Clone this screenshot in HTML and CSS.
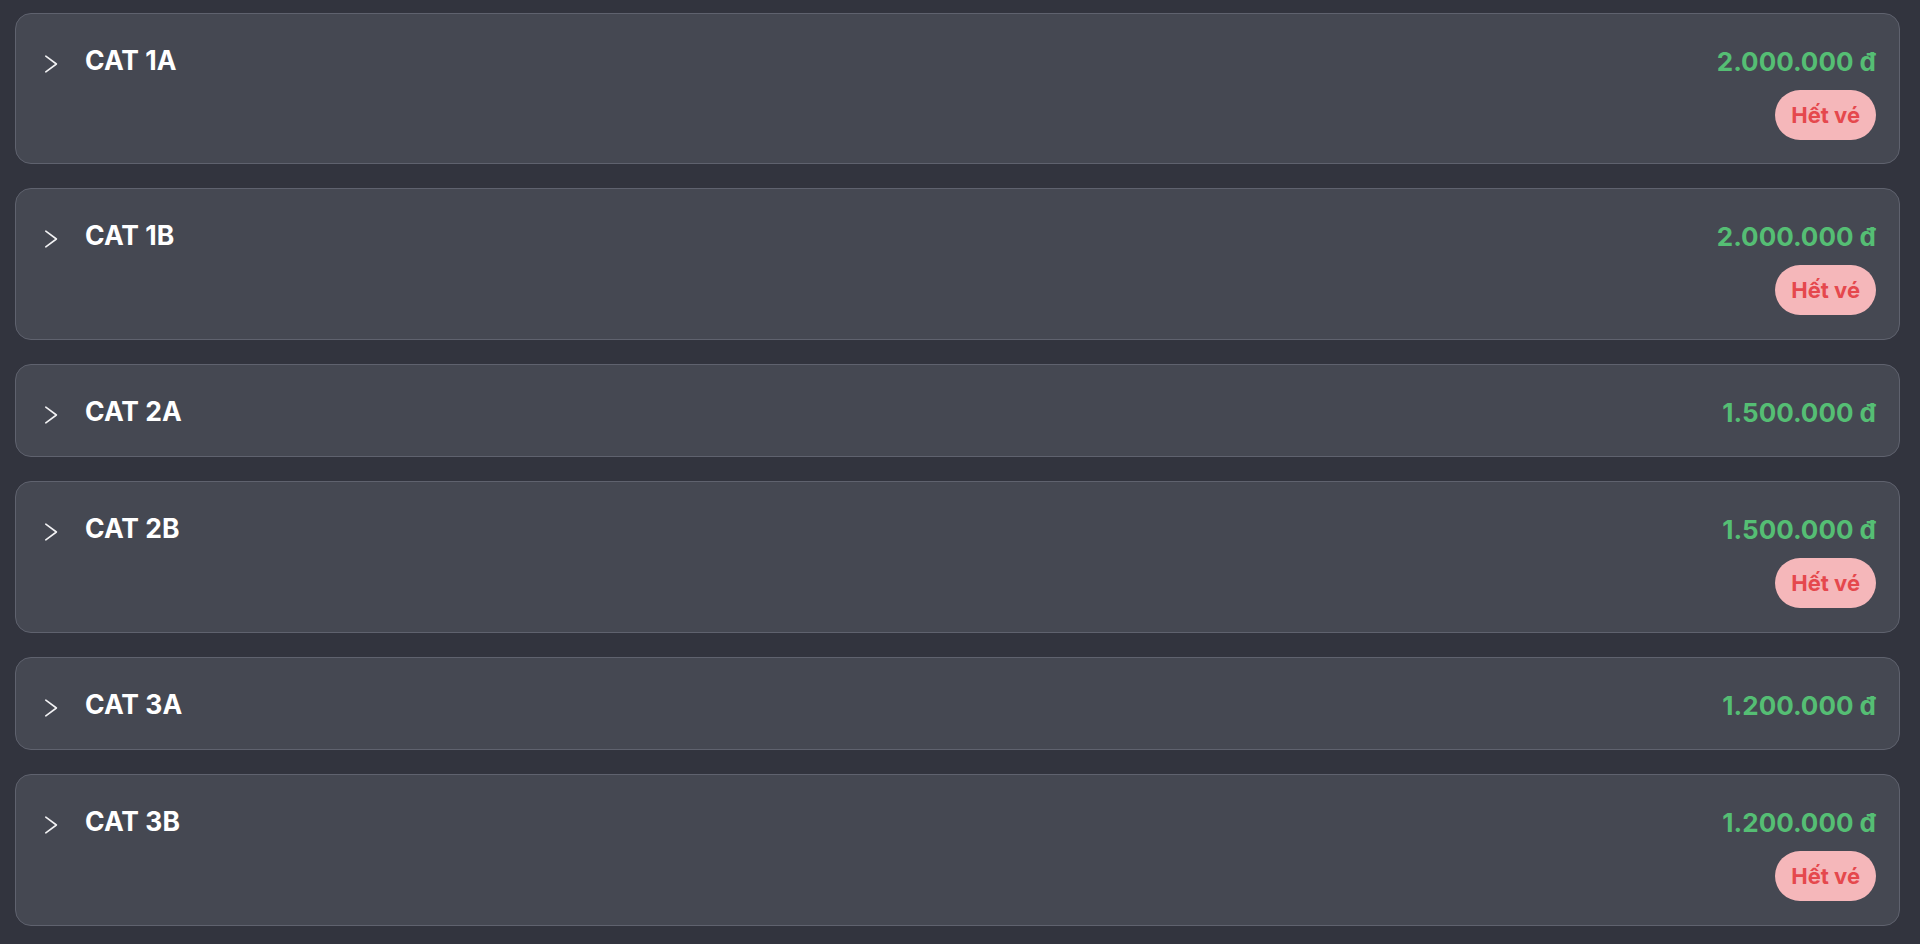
FILE: index.html
```html
<!DOCTYPE html>
<html lang="vi">
<head>
<meta charset="utf-8">
<title>Ticket categories</title>
<link rel="stylesheet" href="styles.css">
</head>
<body>
<main class="ticket-list">
  <div class="ticket">
    <div class="ticket-head">
      <svg class="chevron" viewBox="0 0 28 28" width="28" height="28"><path d="M8.8 10.2 L19.4 18 L8.8 25.8" /></svg>
      <span class="ticket-name">CAT 1A</span>
    </div>
    <div class="ticket-side">
      <span class="price">2.000.000 đ</span>
      <span class="badge">Hết vé</span>
    </div>
  </div>
  <div class="ticket">
    <div class="ticket-head">
      <svg class="chevron" viewBox="0 0 28 28" width="28" height="28"><path d="M8.8 10.2 L19.4 18 L8.8 25.8" /></svg>
      <span class="ticket-name">CAT 1B</span>
    </div>
    <div class="ticket-side">
      <span class="price">2.000.000 đ</span>
      <span class="badge">Hết vé</span>
    </div>
  </div>
  <div class="ticket">
    <div class="ticket-head">
      <svg class="chevron" viewBox="0 0 28 28" width="28" height="28"><path d="M8.8 10.2 L19.4 18 L8.8 25.8" /></svg>
      <span class="ticket-name">CAT 2A</span>
    </div>
    <div class="ticket-side">
      <span class="price">1.500.000 đ</span>
    </div>
  </div>
  <div class="ticket">
    <div class="ticket-head">
      <svg class="chevron" viewBox="0 0 28 28" width="28" height="28"><path d="M8.8 10.2 L19.4 18 L8.8 25.8" /></svg>
      <span class="ticket-name">CAT 2B</span>
    </div>
    <div class="ticket-side">
      <span class="price">1.500.000 đ</span>
      <span class="badge">Hết vé</span>
    </div>
  </div>
  <div class="ticket">
    <div class="ticket-head">
      <svg class="chevron" viewBox="0 0 28 28" width="28" height="28"><path d="M8.8 10.2 L19.4 18 L8.8 25.8" /></svg>
      <span class="ticket-name">CAT 3A</span>
    </div>
    <div class="ticket-side">
      <span class="price">1.200.000 đ</span>
    </div>
  </div>
  <div class="ticket">
    <div class="ticket-head">
      <svg class="chevron" viewBox="0 0 28 28" width="28" height="28"><path d="M8.8 10.2 L19.4 18 L8.8 25.8" /></svg>
      <span class="ticket-name">CAT 3B</span>
    </div>
    <div class="ticket-side">
      <span class="price">1.200.000 đ</span>
      <span class="badge">Hết vé</span>
    </div>
  </div>
</main>
</body>
</html>
```

FILE: styles.css
```css
html, body {
  margin: 0;
  padding: 0;
  background: #32343e;
  height: 100%;
}

body {
  font-family: Inter, "Noto Sans", "Liberation Sans", sans-serif;
  color: #ffffff;
}

.ticket-list {
  display: flex;
  flex-direction: column;
  gap: 24px;
  padding: 12.5px 20px 0 15px;
}

.ticket {
  display: flex;
  justify-content: space-between;
  align-items: flex-start;
  background: #454852;
  border: 1px solid #5f626e;
  border-radius: 16px;
  padding: 23px 23px 21.5px 21px;
}

.ticket-head {
  display: flex;
  align-items: center;
  gap: 20px;
  height: 46px;
}

.chevron {
  display: block;
  flex: none;
}

.chevron path {
  fill: none;
  stroke: #f2f2f4;
  stroke-width: 1.6;
  stroke-linecap: round;
  stroke-linejoin: round;
}

.ticket-name {
  font-size: 26.5px;
  font-weight: 700;
  line-height: 46px;
}

.ticket-side {
  display: flex;
  flex-direction: column;
  align-items: flex-end;
  padding-top: 3px;
}

.price {
  font-size: 26px;
  font-weight: 700;
  line-height: 44px;
  color: #55be74;
}

.badge {
  margin-top: 6px;
  margin-bottom: 2px;
  height: 50px;
  line-height: 50px;
  padding: 0 16px;
  border-radius: 25px;
  background: #f5b7ba;
  color: #e5484d;
  font-size: 22px;
  font-weight: 700;
}
```
